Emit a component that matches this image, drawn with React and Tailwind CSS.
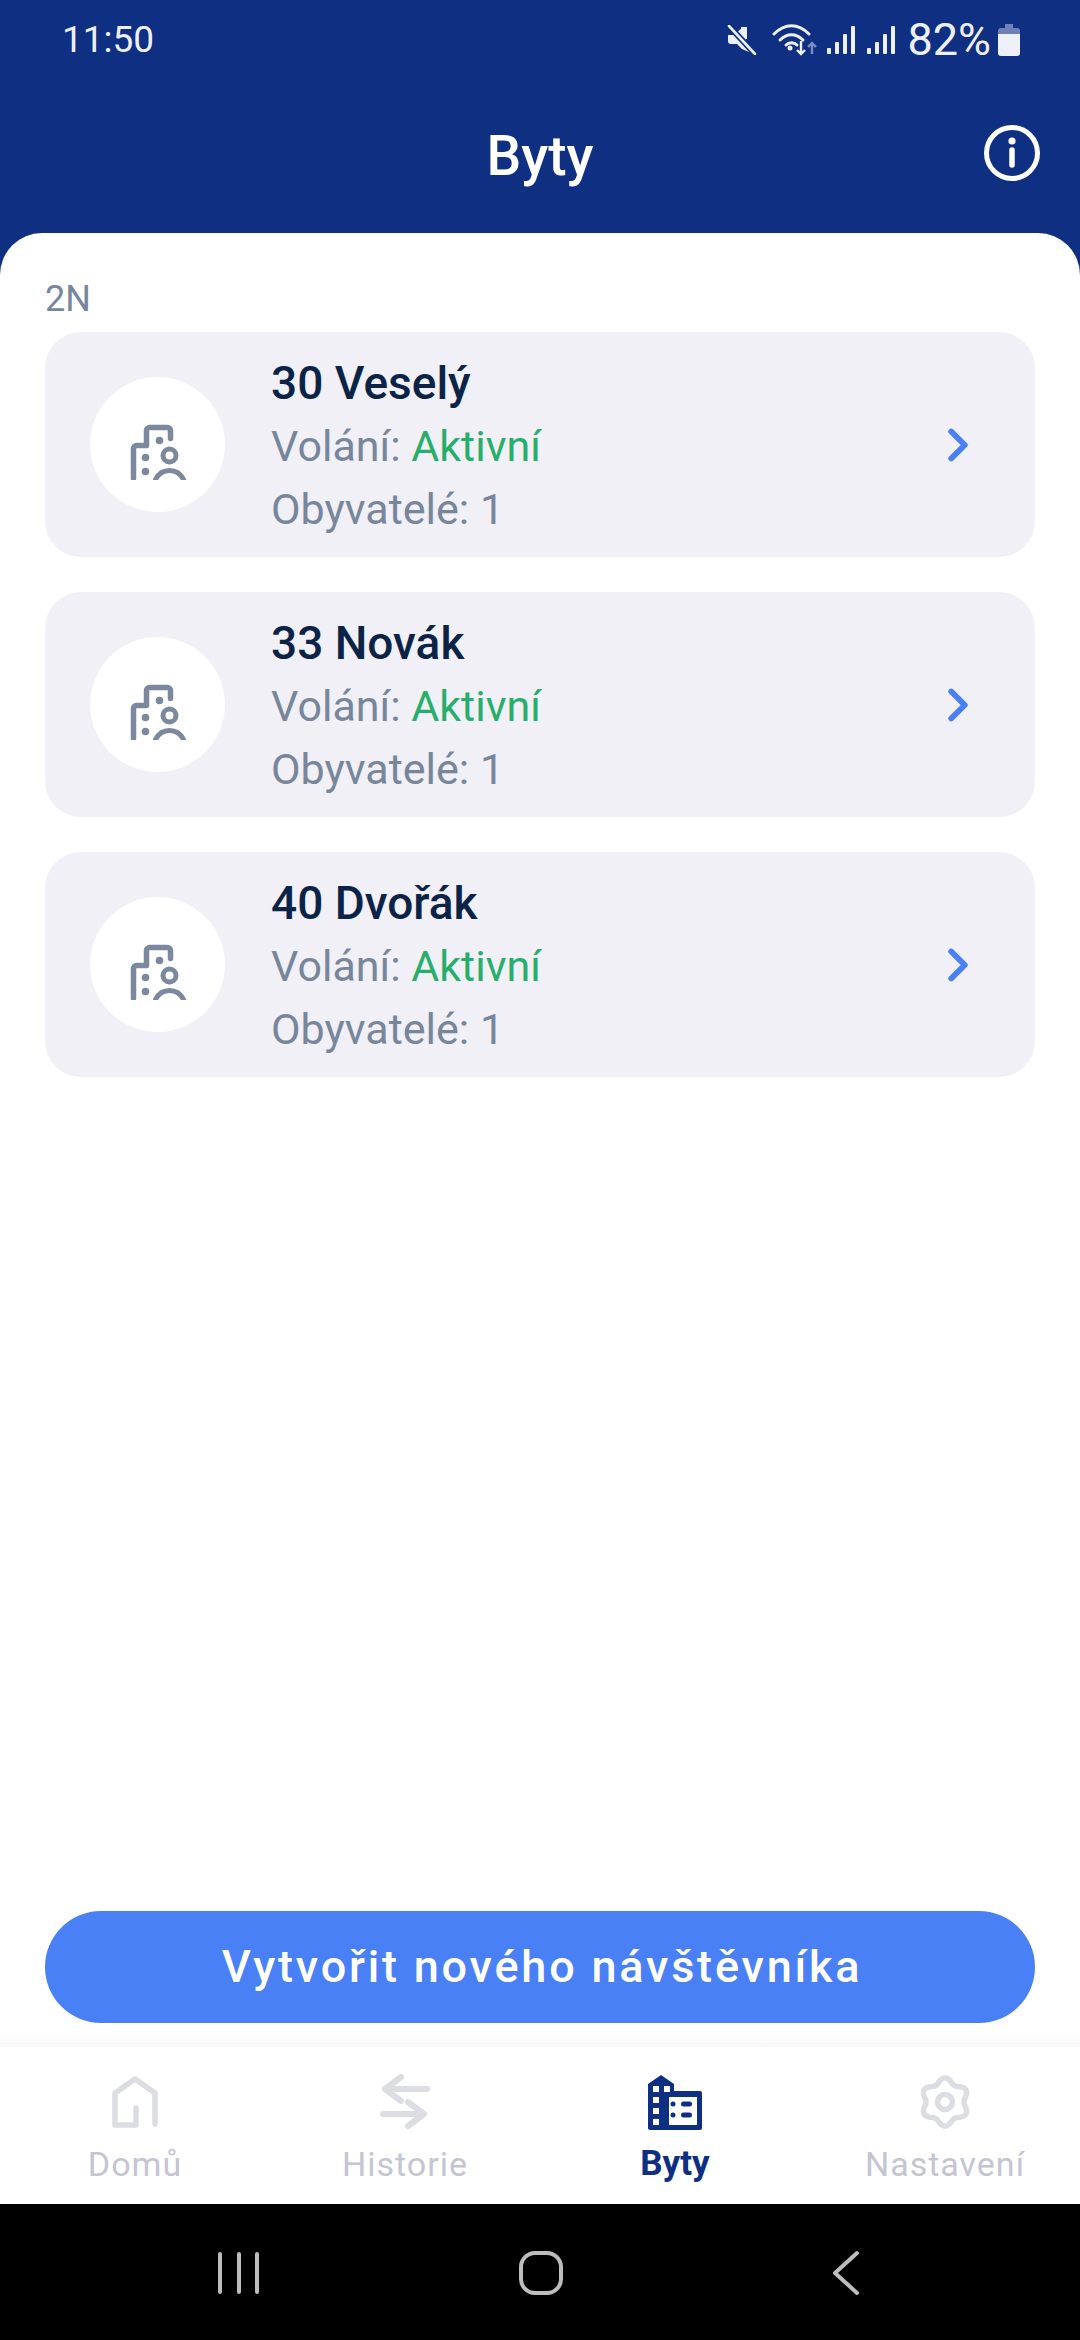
import { ChevronRight } from "lucide-react"

const apartments = [
  { id: 1, name: "30 Veselý" },
  { id: 2, name: "33 Novák" },
  { id: 3, name: "40 Dvořák" },
]

// six soft lobes, top lobe pointing up
const gearPath = () => {
  const pts = []
  for (let i = 0; i < 120; i++) {
    const a = (i / 120) * Math.PI * 2
    const r = 21.5 + 2.6 * Math.cos(6 * a)
    pts.push(`${(26 + r * Math.sin(a)).toFixed(2)} ${(27 - r * Math.cos(a)).toFixed(2)}`)
  }
  return `M${pts.join("L")}Z`
}

function StatusIcons() {
  return (
    <div className="flex items-center">
      <svg width="30" height="30" viewBox="0 0 30 30" className="mr-[15px]">
        <path d="M1 10h6L16 2v8L25 26l-3 1L15 24l-5-5H4a3 3 0 0 1-3-3z" fill="#eef0f8" />
        <path d="M17 2V14" stroke="#eef0f8" strokeWidth="6" />
        <path d="M2 1L28 29" stroke="#0f2f82" strokeWidth="6" />
        <path d="M2 1L28 29" stroke="#eef0f8" strokeWidth="2.6" strokeLinecap="round" />
      </svg>
      <svg width="46" height="34" viewBox="0 0 46 34" fill="none" className="mr-[9px]">
        <path d="M2 11C13 0 26 0 37 11" stroke="#eef0f8" strokeWidth="3" strokeLinecap="round" />
        <path d="M8 17C15 10 24 10 31 17" stroke="#eef0f8" strokeWidth="3" strokeLinecap="round" />
        <path d="M14 22C17 19 22 19 25 22" stroke="#eef0f8" strokeWidth="3" strokeLinecap="round" />
        <circle cx="18" cy="25" r="2.5" fill="#eef0f8" />
        <path d="M29 18V31M25 27l4 4 4-4" stroke="#eef0f8" strokeWidth="2.4" />
        <path d="M40 31V20M36 24l4-4 4 4" stroke="#7c8cc0" strokeWidth="2.4" />
      </svg>
      <svg width="28" height="30" viewBox="0 0 28 30" className="mr-[12px]">
        <rect x="0" y="23" width="4" height="6" rx="1" fill="#eef0f8" />
        <rect x="8" y="17" width="4" height="12" rx="1" fill="#eef0f8" />
        <rect x="16" y="9" width="4" height="20" rx="1" fill="#eef0f8" />
        <rect x="24" y="1" width="4" height="28" rx="1" fill="#eef0f8" />
      </svg>
      <svg width="28" height="30" viewBox="0 0 28 30" className="mr-[12px]">
        <rect x="0" y="23" width="4" height="6" rx="1" fill="#eef0f8" />
        <rect x="8" y="17" width="4" height="12" rx="1" fill="#eef0f8" />
        <rect x="16" y="9" width="4" height="20" rx="1" fill="#eef0f8" />
        <rect x="24" y="1" width="4" height="28" rx="1" fill="#eef0f8" />
      </svg>
      <span className="text-[45px] leading-[44px] text-[#eef0f8] mr-[7px]">82%</span>
      <svg width="22" height="32" viewBox="0 0 22 32">
        <path d="M7 0h8v4h4a3 3 0 0 1 3 3v4H0V7a3 3 0 0 1 3-3h4z" fill="#6f80b8" />
        <path d="M0 10h22v19a3 3 0 0 1-3 3H3a3 3 0 0 1-3-3z" fill="#eef0f8" />
      </svg>
    </div>
  )
}

function ApartmentIcon() {
  return (
    <svg width="70" height="70" viewBox="32.5 32.5 70 70" fill="none" stroke="#7b889d" strokeWidth="5.5" strokeLinecap="round" strokeLinejoin="round">
      <path d="M43 101V71a3 3 0 0 1 3-3H56V53a3 3 0 0 1 3-3H77a3 3 0 0 1 3 3V61" />
      <circle cx="69" cy="63" r="3.8" fill="#7b889d" stroke="none" />
      <circle cx="55" cy="80" r="3.8" fill="#7b889d" stroke="none" />
      <circle cx="55" cy="94" r="3.8" fill="#7b889d" stroke="none" />
      <circle cx="79" cy="78" r="6.5" strokeWidth="5" />
      <path d="M65 102C71 90 87 90 93 102" strokeWidth="5" />
    </svg>
  )
}

function ApartmentCard({ name }) {
  return (
    <div className="flex items-center h-[225px] bg-[#f0f0f6] rounded-[36px] pl-[45px] pr-[50px]">
      <div className="flex items-center justify-center w-[135px] h-[135px] rounded-full bg-white shrink-0">
        <ApartmentIcon />
      </div>
      <div className="flex-1 ml-[46px] pt-[3px] text-[43px] leading-[63px] text-[#78869c]">
        <div className="text-[#0c2348] font-medium text-[46px]">{name}</div>
        <div>
          Volání: <span className="text-[#27ae6b]">Aktivní</span>
        </div>
        <div>Obyvatelé: 1</div>
      </div>
      <ChevronRight size={54} strokeWidth={2.6} className="text-[#4a80f5]" />
    </div>
  )
}

function BottomTab({ label, active, children }) {
  return (
    <div className="flex flex-col items-center">
      <div className="flex items-center justify-center h-[60px]">{children}</div>
      <div className={active ? "mt-[12px] text-[35px] leading-[40px] font-bold text-[#0f2f82]" : "mt-[12px] text-[34px] leading-[40px] tracking-[1px] text-[#c3c5d0]"}>
        {label}
      </div>
    </div>
  )
}

export default function App() {
  return (
    <div className="flex flex-col w-[1080px] h-[2340px] bg-[#0f2f82] font-['Roboto',sans-serif] overflow-hidden">
      <div className="flex items-center justify-between h-[80px] pl-[62px] pr-[60px]">
        <span className="text-[37px] text-[#eef0f8]">11:50</span>
        <StatusIcons />
      </div>

      <div className="relative flex items-center justify-center h-[153px]">
        <h1 className="text-[55px] font-medium text-white">Byty</h1>
        <svg width="58" height="58" viewBox="0 0 58 58" fill="none" className="absolute right-[39px] top-[44px]">
          <circle cx="29" cy="29" r="25.5" stroke="white" strokeWidth="5" />
          <circle cx="29" cy="17" r="3.6" fill="white" />
          <path d="M29 26V41" stroke="white" strokeWidth="5.5" strokeLinecap="round" />
        </svg>
      </div>

      <div className="flex-1 flex flex-col bg-white rounded-t-[42px] px-[45px] pb-[7px]">
        <div className="mt-[46px] mb-[13px] text-[36px] leading-[40px] text-[#78869c]">2N</div>
        <div className="flex flex-col gap-[35px]">
          {apartments.map((a) => (
            <ApartmentCard key={a.id} name={a.name} />
          ))}
        </div>
        <div className="flex-1" />
        <button className="h-[112px] rounded-full bg-[#4a80f5] pl-[4px] text-white text-[45px] font-medium tracking-[2.8px]">
          Vytvořit nového návštěvníka
        </button>
      </div>

      <div className="h-[17px] bg-gradient-to-b from-white to-[#f8f8fa]" />
      <div className="grid grid-cols-4 h-[157px] pt-[25px] bg-white">
        <BottomTab label="Domů">
          <svg width="46" height="54" viewBox="0 0 46 54" fill="none" stroke="#dcdde3" strokeWidth="5.5" strokeLinecap="round" strokeLinejoin="round">
            <path d="M43 49V18L23 4 3 18V50H24V33" />
          </svg>
        </BottomTab>
        <BottomTab label="Historie">
          <svg width="50" height="56" viewBox="0 0 50 56" fill="none" stroke="#dcdde3" strokeWidth="6" strokeLinecap="round" strokeLinejoin="round">
            <path d="M47 15H6M21 3L5 15 21 27M3 40H44M28 28L44 40 28 52" />
          </svg>
        </BottomTab>
        <BottomTab active label="Byty">
          <svg width="54" height="55" viewBox="0 0 54 55">
            <path d="M0 9L13 0 26 9V16H52a2 2 0 0 1 2 2V53a2 2 0 0 1-2 2H2a2 2 0 0 1-2-2z" fill="#0f2f82" />
            <g fill="white">
              <rect x="5" y="11" width="6" height="6" />
              <rect x="16" y="11" width="6" height="6" />
              <rect x="5" y="22" width="6" height="6" />
              <rect x="5" y="33" width="6" height="6" />
              <rect x="5" y="44" width="6" height="6" />
              <rect x="21" y="22" width="28" height="28" />
            </g>
            <g fill="#0f2f82">
              <circle cx="25" cy="29" r="2.5" />
              <circle cx="25" cy="40" r="2.5" />
              <rect x="33" y="26.5" width="11" height="5" rx="2.5" />
              <rect x="33" y="37.5" width="11" height="5" rx="2.5" />
            </g>
          </svg>
        </BottomTab>
        <BottomTab label="Nastavení">
          <svg width="52" height="54" viewBox="0 0 52 54" fill="none" stroke="#dcdde3" strokeWidth="5.5" strokeLinejoin="round">
            <path d={gearPath()} />
            <circle cx="26" cy="27" r="7.5" />
          </svg>
        </BottomTab>
      </div>

      <div className="flex items-center h-[136px] bg-black pl-[217px] pt-[2px]">
        <svg width="44" height="44" viewBox="0 0 44 44" stroke="#bdbdbd" strokeWidth="4" strokeLinecap="round">
          <path d="M3 3V41M22 3V41M40 3V41" />
        </svg>
        <svg width="44" height="44" viewBox="0 0 44 44" fill="none" stroke="#bdbdbd" strokeWidth="4" className="ml-[258px]">
          <rect x="2" y="2" width="40" height="40" rx="14" />
        </svg>
        <svg width="28" height="46" viewBox="0 0 28 46" fill="none" stroke="#bdbdbd" strokeWidth="4" strokeLinecap="round" strokeLinejoin="round" className="ml-[269px]">
          <path d="M25 3L3 23l22 20" />
        </svg>
      </div>
    </div>
  )
}
